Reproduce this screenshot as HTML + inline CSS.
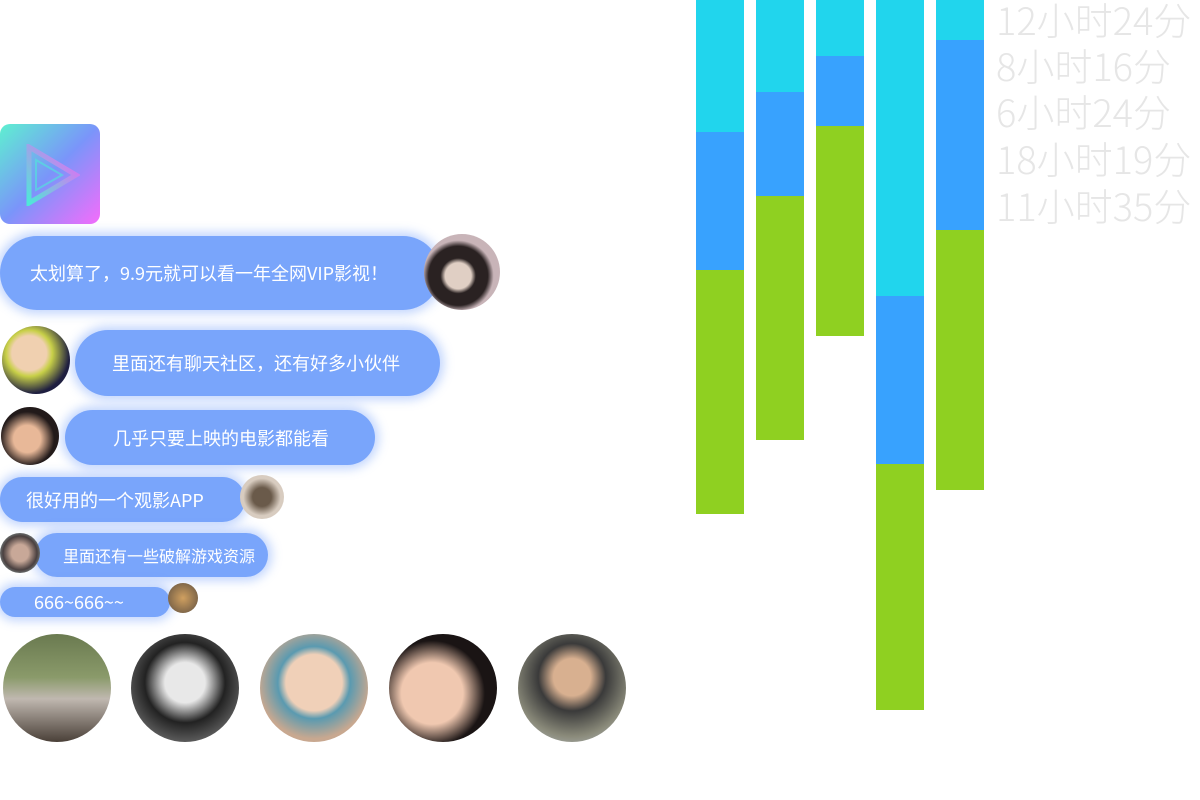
<!DOCTYPE html>
<html><head><meta charset="utf-8"><style>
body{margin:0;width:1200px;height:800px;background:#fff;position:relative;overflow:hidden;font-family:"Liberation Sans","Noto Sans CJK SC",sans-serif}
.a{position:absolute}
.b{position:absolute;background:#79a5fb;border-radius:40px;box-shadow:0 0 10px 4px rgba(121,165,251,.45);color:#fff;display:flex;align-items:center;box-sizing:border-box;font-family:"Noto Sans CJK SC",sans-serif;white-space:nowrap}
.c{position:absolute;border-radius:50%;overflow:hidden}
.bar{position:absolute;width:48px}
.t{position:absolute;left:996px;font-size:38px;color:#e6e6e6;line-height:46px;font-family:"Noto Sans CJK SC",sans-serif;font-weight:300;white-space:nowrap}
</style></head><body>
<div class="a" style="left:0;top:124px;width:100px;height:100px;border-radius:10px;background:linear-gradient(135deg,#5ef0d0,#7a95fa 50%,#f56cfb)"></div>
<svg class="a" style="left:26px;top:144px" width="54" height="62"><defs><linearGradient id="g" x1="0" y1="1" x2="1" y2="0"><stop offset="0" stop-color="#4ee8d8"/><stop offset="1" stop-color="#f060f8"/></linearGradient></defs><polygon points="3,3 50,31 3,59" fill="none" stroke="url(#g)" stroke-width="5"/><polygon points="10,16 36,31 10,46" fill="none" stroke="#4ee8d8" stroke-width="2" opacity=".6"/></svg>

<div class="b" style="left:0;top:236px;width:440px;height:74px;padding-left:30px;font-size:18px">太划算了，9.9元就可以看一年全网VIP影视！</div>
<div class="c" style="left:424px;top:234px;width:76px;height:76px;background:radial-gradient(circle at 45% 55%,#e0cfc4 0 22%,#2a2222 30% 50%,#c8b4b8 60%)"></div>

<div class="b" style="left:75px;top:330px;width:365px;height:66px;padding-left:37px;font-size:18px">里面还有聊天社区，还有好多小伙伴</div>
<div class="c" style="left:2px;top:326px;width:68px;height:68px;background:radial-gradient(circle at 40% 40%,#f0d0b0 0 30%,#c8d048 40%,#1e1e40 70%)"></div>

<div class="b" style="left:65px;top:410px;width:310px;height:55px;padding-left:48px;font-size:18px">几乎只要上映的电影都能看</div>
<div class="c" style="left:1px;top:407px;width:58px;height:58px;background:radial-gradient(circle at 45% 55%,#e8b898 0 30%,#221a1a 60%)"></div>

<div class="b" style="left:0;top:477px;width:245px;height:45px;padding-left:26px;font-size:18px">很好用的一个观影APP</div>
<div class="c" style="left:240px;top:475px;width:44px;height:44px;background:radial-gradient(circle,#6a5a4a 0 30%,#d8ccc0 60%)"></div>

<div class="b" style="left:35px;top:533px;width:233px;height:44px;padding-left:28px;font-size:16px">里面还有一些破解游戏资源</div>
<div class="c" style="left:0;top:533px;width:40px;height:40px;background:radial-gradient(circle,#c8a898 0 30%,#4a4040 60%,#b8e0e0)"></div>

<div class="b" style="left:0;top:587px;width:170px;height:30px;padding-left:34px;font-size:18px">666~666~~</div>
<div class="c" style="left:168px;top:583px;width:30px;height:30px;background:radial-gradient(circle,#d0a060,#605040)"></div>

<div class="c" style="left:3px;top:634px;width:108px;height:108px;background:linear-gradient(#6a7a50,#8a9a6a 40%,#c0b8b0 60%,#4a4038)"></div>
<div class="c" style="left:131px;top:634px;width:108px;height:108px;background:radial-gradient(circle at 50% 45%,#e8e8e8 0 25%,#222 50%,#999)"></div>
<div class="c" style="left:260px;top:634px;width:108px;height:108px;background:radial-gradient(circle at 50% 45%,#f0d0b8 0 35%,#5a9ab0 45%,#c8a890 70%)"></div>
<div class="c" style="left:389px;top:634px;width:108px;height:108px;background:radial-gradient(circle at 40% 55%,#f0c8b0 0 35%,#1a1414 60%)"></div>
<div class="c" style="left:518px;top:634px;width:108px;height:108px;background:radial-gradient(circle at 50% 40%,#d8b090 0 22%,#3a3a3a 40%,#8a8a7a 70%,#c0c8d0)"></div>

<div class="bar" style="left:696px;top:0;height:132px;background:#21d5ed"></div>
<div class="bar" style="left:696px;top:132px;height:138px;background:#38a2fe"></div>
<div class="bar" style="left:696px;top:270px;height:244px;background:#8fd021"></div>
<div class="bar" style="left:756px;top:0;height:92px;background:#21d5ed"></div>
<div class="bar" style="left:756px;top:92px;height:104px;background:#38a2fe"></div>
<div class="bar" style="left:756px;top:196px;height:244px;background:#8fd021"></div>
<div class="bar" style="left:816px;top:0;height:56px;background:#21d5ed"></div>
<div class="bar" style="left:816px;top:56px;height:70px;background:#38a2fe"></div>
<div class="bar" style="left:816px;top:126px;height:210px;background:#8fd021"></div>
<div class="bar" style="left:876px;top:0;height:296px;background:#21d5ed"></div>
<div class="bar" style="left:876px;top:296px;height:168px;background:#38a2fe"></div>
<div class="bar" style="left:876px;top:464px;height:246px;background:#8fd021"></div>
<div class="bar" style="left:936px;top:0;height:40px;background:#21d5ed"></div>
<div class="bar" style="left:936px;top:40px;height:190px;background:#38a2fe"></div>
<div class="bar" style="left:936px;top:230px;height:260px;background:#8fd021"></div>

<div class="t" style="top:-4px">12小时24分</div>
<div class="t" style="top:42px">8小时16分</div>
<div class="t" style="top:88px">6小时24分</div>
<div class="t" style="top:135px">18小时19分</div>
<div class="t" style="top:182px">11小时35分</div>
</body></html>
